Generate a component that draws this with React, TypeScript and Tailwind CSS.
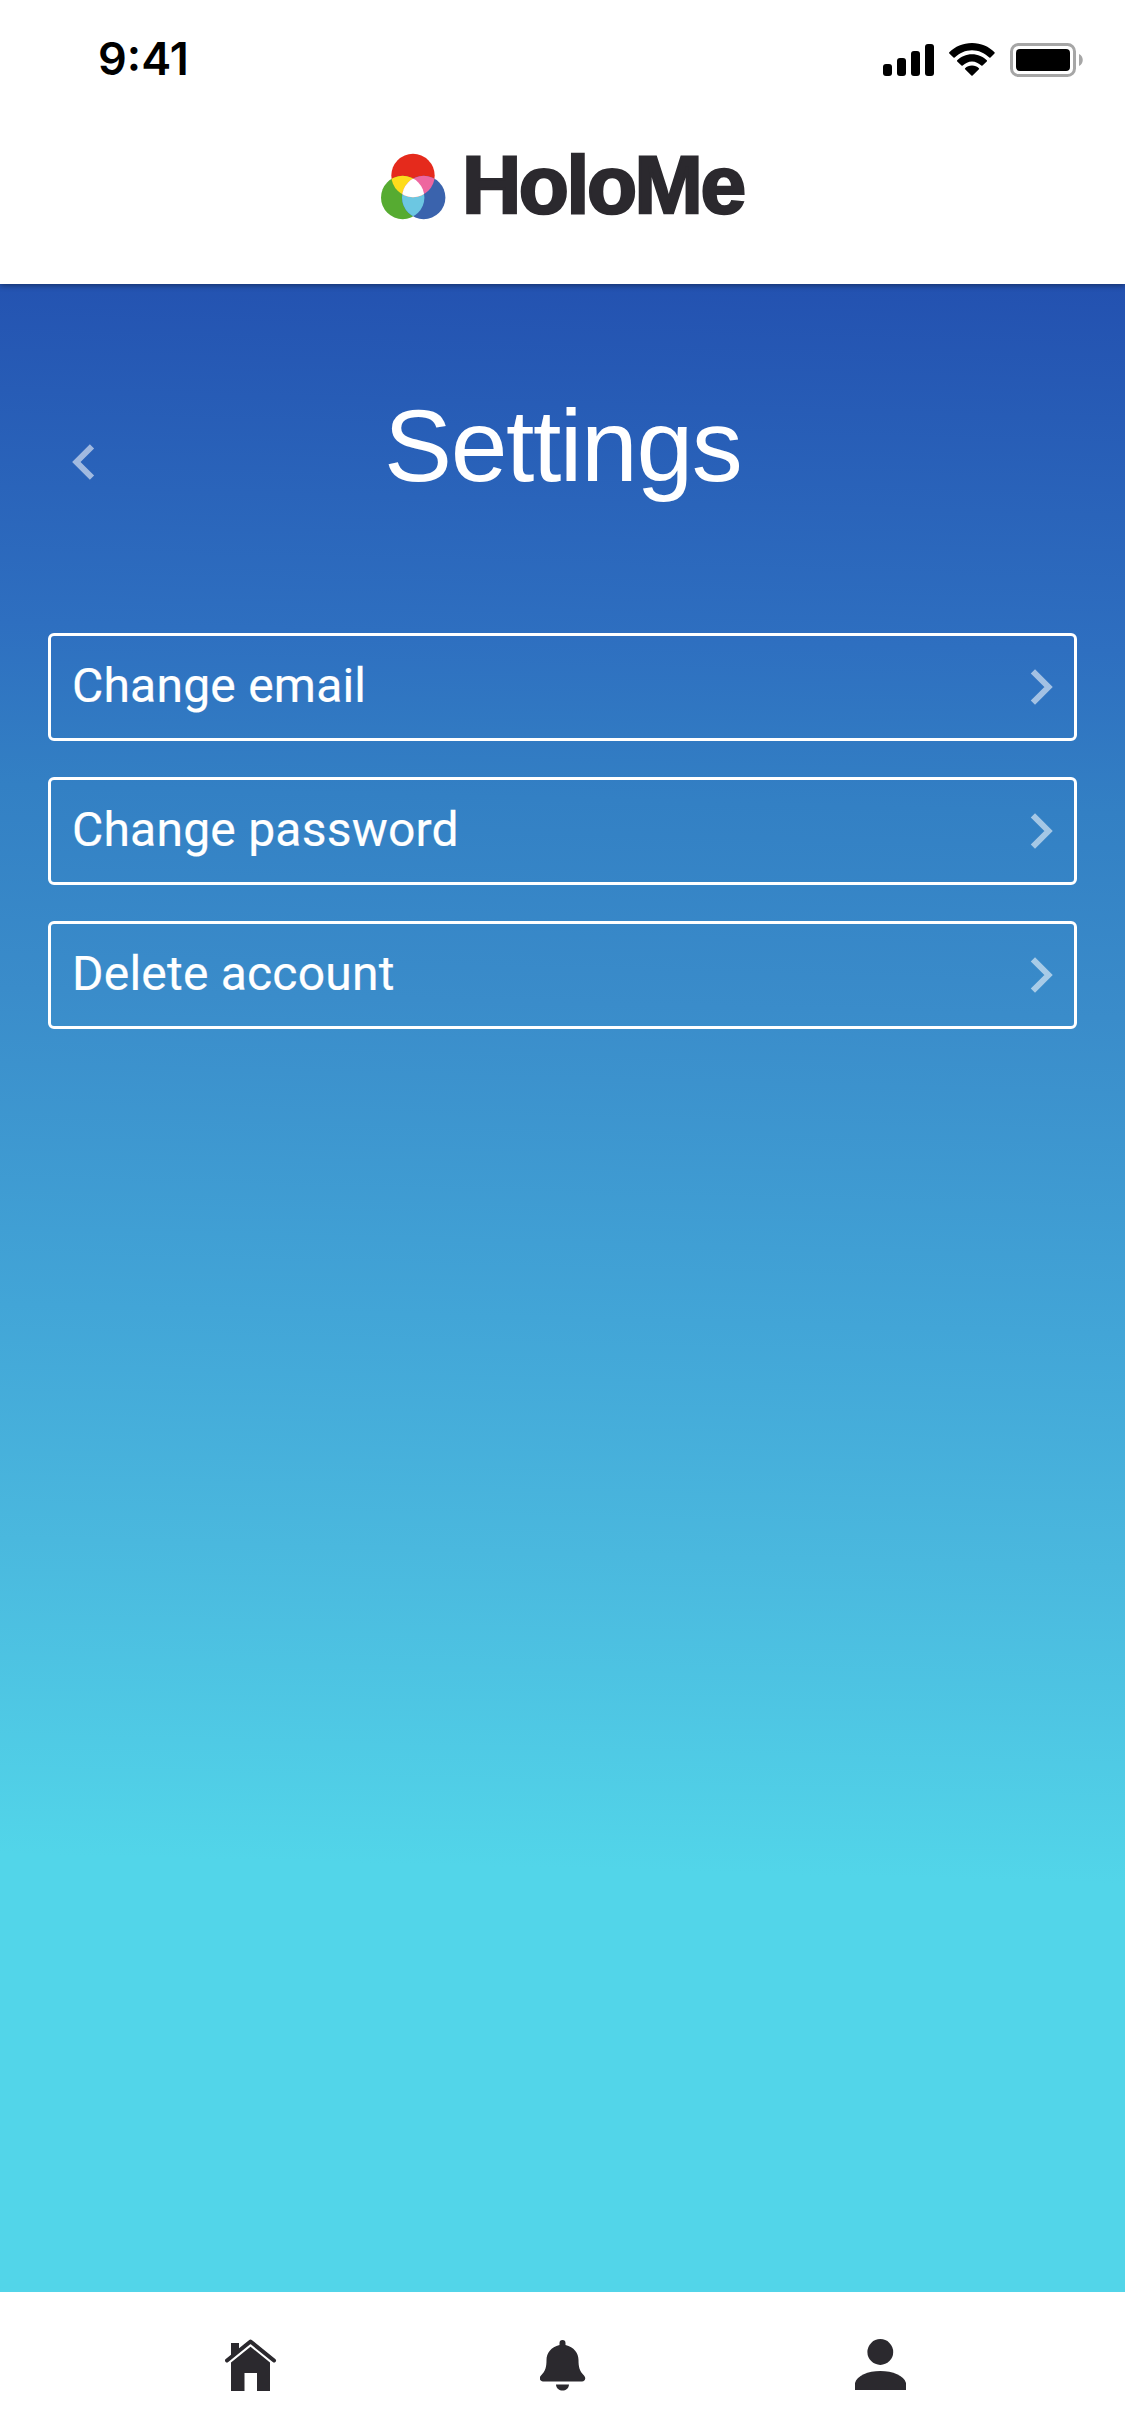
import React from "react";

function StatusBar() {
  return (
    <div className="flex h-[120px] items-start justify-between pl-[98px] pr-[42px]">
      <span className="mt-[32px] font-['Inter',sans-serif] text-[45px] font-semibold leading-[54px] text-black">
        9:41
      </span>
      <div className="mt-[43px] flex items-start">
        <svg width="52" height="34" viewBox="0 0 52 34" className="mr-[13px]">
          <rect x="0" y="21" width="9" height="12" rx="3" />
          <rect x="14" y="15" width="9" height="18" rx="3" />
          <rect x="28" y="8" width="9" height="25" rx="3" />
          <rect x="42" y="1" width="9" height="32" rx="3" />
        </svg>
        <svg width="48" height="34" viewBox="0 0 48 34" className="mr-[14px]">
          <path d="M24 0C33 0 41 3.600 46.500 9.300Q47 9.900 46.500 10.500L42.500 14.500Q42 15 41.300 14.500C36.600 10 30.500 7.200 24 7.200S11.400 10 6.700 14.500Q6 15 5.500 14.500L1.300 10.500Q.8 9.900 1.300 9.300C7 3.600 15 0 24 0Z" />
          <path d="M24 11.200C30 11.200 35 13.600 38.800 17.300Q39.300 17.900 38.800 18.400L34.500 22.600Q34 23.100 33.300 22.600C30.700 20.200 27.500 18.400 24 18.400S17.300 20.200 14.700 22.600Q14 23.100 13.500 22.600L9.200 18.400Q8.700 17.900 9.200 17.300C13 13.600 18 11.200 24 11.200Z" />
          <path d="M24 22.600C26.800 22.600 29.200 23.600 30.900 25.200Q31.400 25.800 30.900 26.300L24.600 32.600Q24 33.100 23.400 32.600L17.100 26.300Q16.600 25.800 17.100 25.200C18.800 23.600 21.200 22.600 24 22.600Z" />
        </svg>
        <svg width="73" height="34" viewBox="0 0 73 34">
          <rect x="1.500" y="1.500" width="63" height="31" rx="7" fill="none" stroke="#a6a6a6" strokeWidth="3" />
          <rect x="6" y="6" width="54" height="22" rx="4" />
          <path d="M69 11C74 13 74 21 69 23Z" fill="#a6a6a6" />
        </svg>
      </div>
    </div>
  );
}

function LogoMark() {
  return (
    <svg width="66" height="68" viewBox="0 0 66 68">
      <defs>
        <clipPath id="top">
          <circle cx="32" cy="22.500" r="21.700" />
        </clipPath>
        <clipPath id="left">
          <circle cx="21.700" cy="44.500" r="21.700" />
        </clipPath>
      </defs>
      <circle cx="32" cy="22.500" r="21.700" fill="#e52a1c" />
      <circle cx="21.700" cy="44.500" r="21.700" fill="#56ab31" />
      <circle cx="42.700" cy="44.500" r="21.700" fill="#3a63ad" />
      <circle cx="42.700" cy="44.500" r="21.700" fill="#6cc7e2" clipPath="url(#left)" />
      <g clipPath="url(#top)">
        <circle cx="21.700" cy="44.500" r="21.700" fill="#fedc1c" />
        <circle cx="42.700" cy="44.500" r="21.700" fill="#ee669f" />
        <circle cx="42.700" cy="44.500" r="21.700" fill="#ffffff" clipPath="url(#left)" />
      </g>
    </svg>
  );
}

function Header() {
  return (
    <header className="relative z-10 h-[284px] bg-white shadow-[0_1px_6px_rgba(0,0,0,0.45)]">
      <StatusBar />
      <div className="flex items-start pl-[381px] pt-[33px]">
        <LogoMark />
        <span className="-mt-[16px] ml-[15px] font-['Liberation_Sans',sans-serif] text-[82px] font-bold leading-[96px] tracking-[-2.400px] text-[#2b292e] [-webkit-text-stroke:2.500px_#2b292e]">
          HoloMe
        </span>
      </div>
    </header>
  );
}

function SettingsRow({ label }: { label: string }) {
  return (
    <button className="flex h-[108px] items-center justify-between rounded-[6px] border-[3px] border-white pl-[21px] pr-[21px] text-left">
      <span className="-mt-[2px] font-['Roboto',sans-serif] text-[48px] leading-[56px] tracking-[0.220px] text-white [-webkit-text-stroke:0.200px_white]">
        {label}
      </span>
      <svg width="24" height="38" viewBox="0 0 24 38">
        <path d="M3.900 3.400L19.500 19L3.900 34.600" fill="none" stroke="#ffffff" strokeOpacity="0.56" strokeWidth="6" />
      </svg>
    </button>
  );
}

function BottomNav() {
  return (
    <nav className="flex h-[144px] items-start bg-white pt-[46px] text-[#2b292e]">
      <svg width="52" height="54" viewBox="0 0 52 54" fill="currentColor" className="ml-[225px] mt-[1px]">
        <path d="M6 19V4H14V10L6 17Z" />
        <path d="M2 21.500L25.500 2.500L49 21.500" fill="none" stroke="currentColor" strokeWidth="4" strokeLinecap="round" strokeLinejoin="round" />
        <path d="M6 23.500L25.500 7.700L45 23.500V52H32V34H19.500V52H6Z" />
      </svg>
      <svg width="46" height="54" viewBox="0 0 46 54" fill="currentColor" className="ml-[263px] mt-[1px]">
        <path d="M19.500 6V4Q19.500 1 22.500 1T25.500 4V6C34 8 38.500 14 38.500 21C38.500 28 39.500 32 44 36.500C46.500 39 45 42.500 42 42.500H3C0 42.500-1.500 39 1 36.500C5.500 32 6.500 28 6.500 21C6.500 14 11 8 19.500 6Z" />
        <path d="M16 45.500H29C28.500 53.500 16.500 53.500 16 45.500Z" />
      </svg>
      <svg width="52" height="52" viewBox="0 0 52 52" fill="currentColor" className="ml-[268px] mt-px">
        <circle cx="26.300" cy="13" r="12.900" />
        <path d="M1 51V44C3 36.500 14 32 26.300 32S50 36.500 52 44V51Z" />
      </svg>
    </nav>
  );
}

export default function App() {
  return (
    <div className="flex h-[2436px] w-[1125px] flex-col overflow-hidden bg-white">
      <Header />
      <main className="flex-1 bg-[linear-gradient(181.5deg,#2351b0_0%,#2e6fc0_18%,#3380c4_26%,#3a8cca_36%,#42a5d7_51.500%,#4ab8de_63%,#52d5e9_78.500%,#52d5e9_100%)]">
        <div className="flex h-[349px] items-start pl-[72px]">
          <svg width="24" height="38" viewBox="0 0 24 38" className="mt-[159px]">
            <path d="M20 3.400L4.400 19L20 34.600" fill="none" stroke="#ffffff" strokeOpacity="0.56" strokeWidth="6" />
          </svg>
          <h1 className="ml-[288px] mt-[104px] font-['Liberation_Sans',sans-serif] text-[102px] leading-[116px] tracking-[-1.400px] text-white">
            Settings
          </h1>
        </div>
        <div className="flex flex-col gap-[36px] px-[48px]">
          <SettingsRow label="Change email" />
          <SettingsRow label="Change password" />
          <SettingsRow label="Delete account" />
        </div>
      </main>
      <BottomNav />
    </div>
  );
}
